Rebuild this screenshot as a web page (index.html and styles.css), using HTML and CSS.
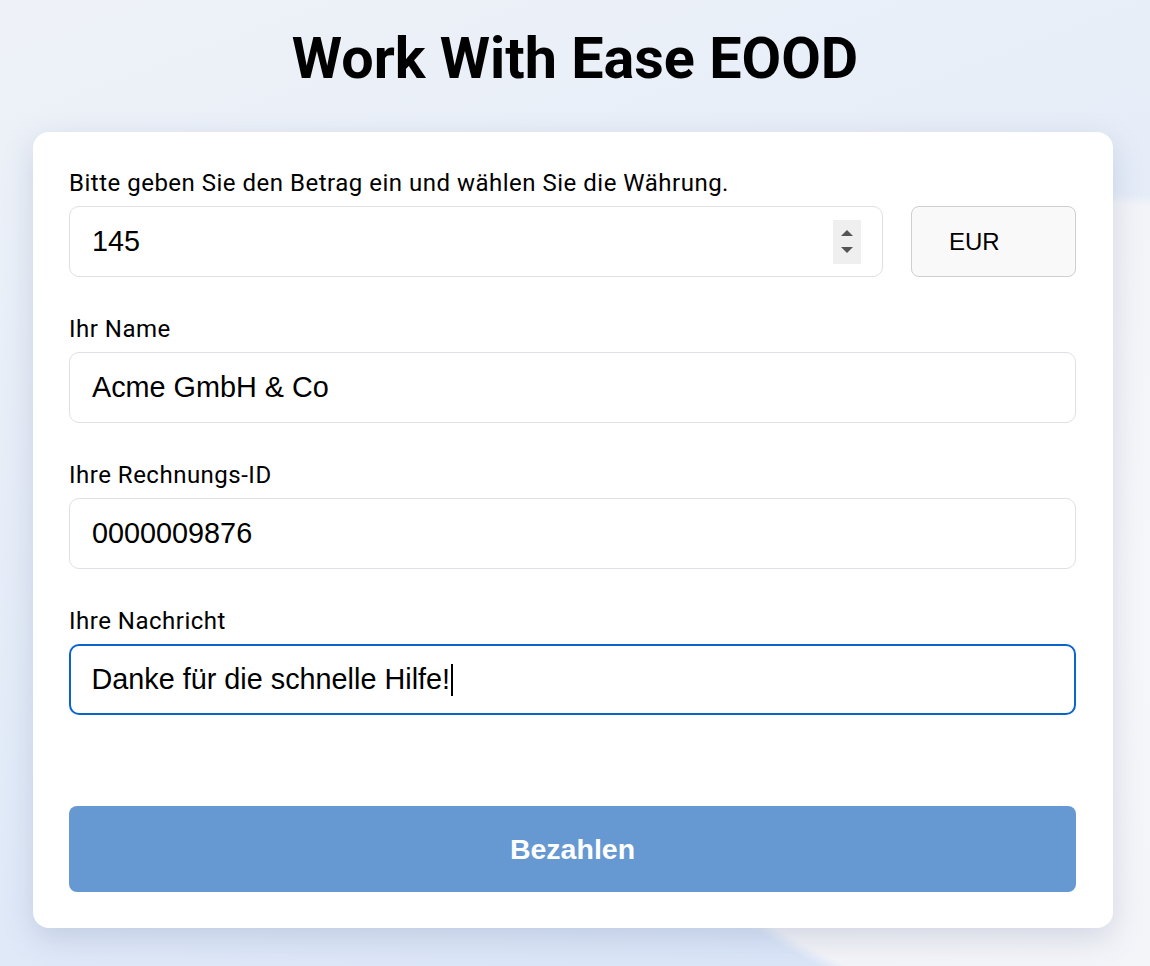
FILE: index.html
```html
<!doctype html>
<html lang="de">
<head>
  <meta charset="UTF-8">
  <meta name="viewport" content="width=device-width, initial-scale=1.0">
  <title>Work With Ease EOOD</title>
  <link rel="stylesheet" href="styles.css">
</head>
<body>
  <h1 class="title">Work With Ease EOOD</h1>

  <form class="card" onsubmit="return false">
    <label class="label" for="amount">Bitte geben Sie den Betrag ein und wählen Sie die Währung.</label>
    <div class="amount-row">
      <div class="field amount">
        <span class="value">145</span>
        <span class="spinner">
          <i class="up"></i>
          <i class="down"></i>
        </span>
      </div>
      <div class="currency">EUR</div>
    </div>

    <label class="label">Ihr Name</label>
    <div class="field"><span class="value">Acme GmbH &amp; Co</span></div>

    <label class="label">Ihre Rechnungs-ID</label>
    <div class="field"><span class="value">0000009876</span></div>

    <label class="label">Ihre Nachricht</label>
    <div class="field focused"><span class="value">Danke für die schnelle Hilfe!</span><span class="caret"></span></div>

    <button class="pay" type="submit">Bezahlen</button>
  </form>
</body>
</html>
```

FILE: styles.css
```css
* {
  margin: 0;
  padding: 0;
  box-sizing: border-box;
}
html,
body {
  height: 100%;
}
body {
  font-family: Roboto, "Liberation Sans", sans-serif;
  color: #000;
  background:
    radial-gradient(ellipse 720px 580px at 1090px 610px, #f6f7fa 0, #f3f4f8 70%, rgba(243, 244, 248, 0) 72%),
    linear-gradient(160deg, #eef2f8 0%, #e6edf8 40%, #d8e4f8 100%);
  overflow: hidden;
}
.title {
  font-size: 57.5px;
  font-weight: 700;
  line-height: 67px;
  text-align: center;
  padding-top: 25px;
  margin-bottom: 40px;
}
.card {
  display: flex;
  flex-direction: column;
  margin: 0 37px 0 33px;
  padding: 38px 37px 36px 36px;
  background-color: #fff;
  border-radius: 16px;
  box-shadow: 0 10px 30px rgba(90, 110, 150, .22);
}
.label {
  font-size: 24px;
  letter-spacing: .5px;
  line-height: 26px;
  margin-bottom: 10px;
}
.field {
  display: flex;
  align-items: center;
  height: 71px;
  padding: 0 22px;
  border: 1px solid #e0e0e4;
  border-radius: 10px;
  font-family: "Liberation Sans", Arial, sans-serif;
  font-size: 28.8px;
  margin-bottom: 39px;
}
.field.focused {
  border: 2.5px solid #0b63cc;
  padding-left: 20.5px;
}
.caret {
  display: inline-block;
  width: 2px;
  height: 32px;
  margin-left: 1px;
  background-color: #000;
}
.amount-row {
  display: flex;
  gap: 28px;
}
.amount {
  flex: 1;
  justify-content: space-between;
  padding-right: 21px;
}
.spinner {
  display: flex;
  flex-direction: column;
  justify-content: center;
  align-items: center;
  gap: 11px;
  width: 28px;
  height: 44px;
  background-color: #efefef;
}
.spinner i {
  width: 0;
  height: 0;
  border-left: 6px solid transparent;
  border-right: 6px solid transparent;
}
.spinner .up {
  border-bottom: 6px solid #555;
}
.spinner .down {
  border-top: 6px solid #555;
}
.currency {
  width: 165px;
  height: 71px;
  padding-left: 37px;
  display: flex;
  align-items: center;
  border: 1px solid #cfcfcf;
  border-radius: 8px;
  background-color: #f9f9f9;
  font-family: "Liberation Sans", Arial, sans-serif;
  font-size: 24px;
}
.pay {
  margin-top: 52px;
  height: 86px;
  border: 0;
  border-radius: 8px;
  background-color: #6699d1;
  color: #fff;
  font-family: "Liberation Sans", Arial, sans-serif;
  font-size: 28.5px;
  font-weight: 700;
  cursor: pointer;
}
```
